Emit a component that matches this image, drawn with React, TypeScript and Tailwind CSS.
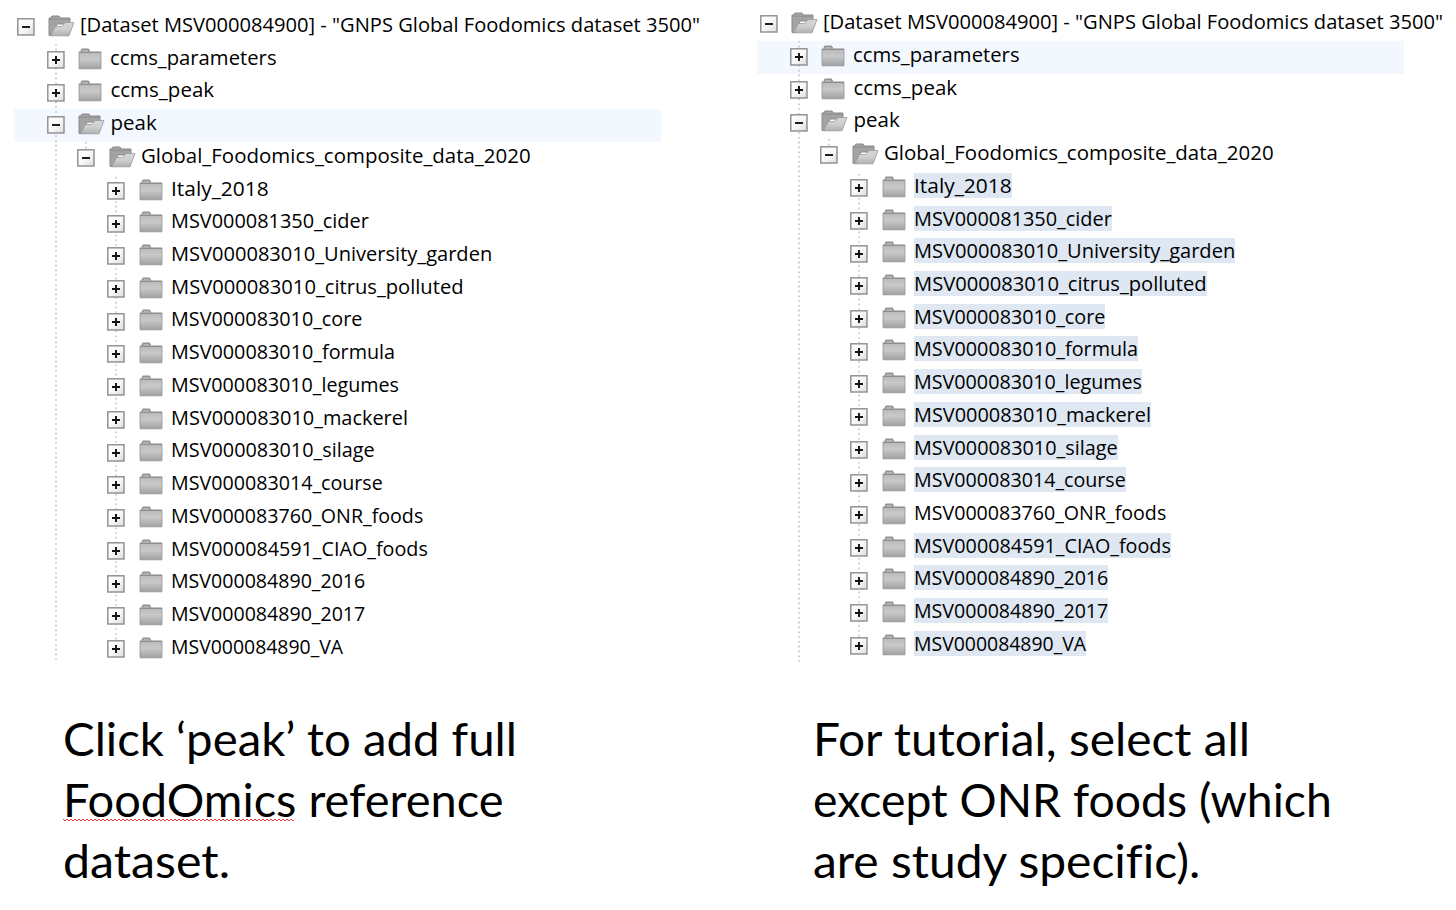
import { useLayoutEffect, useRef, useState } from "react";

type Node = { label: string; level: number; open?: boolean; width: number };

const nodes: Node[] = [
  { label: '[Dataset MSV000084900] - "GNPS Global Foodomics dataset 3500"', level: 0, open: true, width: 620 },
  { label: "ccms_parameters", level: 1, width: 167 },
  { label: "ccms_peak", level: 1, width: 104 },
  { label: "peak", level: 1, open: true, width: 46 },
  { label: "Global_Foodomics_composite_data_2020", level: 2, open: true, width: 390 },
  { label: "Italy_2018", level: 3, width: 98 },
  { label: "MSV000081350_cider", level: 3, width: 198 },
  { label: "MSV000083010_University_garden", level: 3, width: 321 },
  { label: "MSV000083010_citrus_polluted", level: 3, width: 293 },
  { label: "MSV000083010_core", level: 3, width: 191 },
  { label: "MSV000083010_formula", level: 3, width: 224 },
  { label: "MSV000083010_legumes", level: 3, width: 228 },
  { label: "MSV000083010_mackerel", level: 3, width: 237 },
  { label: "MSV000083010_silage", level: 3, width: 204 },
  { label: "MSV000083014_course", level: 3, width: 212 },
  { label: "MSV000083760_ONR_foods", level: 3, width: 252 },
  { label: "MSV000084591_CIAO_foods", level: 3, width: 257 },
  { label: "MSV000084890_2016", level: 3, width: 194 },
  { label: "MSV000084890_2017", level: 3, width: 194 },
  { label: "MSV000084890_VA", level: 3, width: 172.5 },
];

const indents = ["pl-[3px]", "pl-[33.4px]", "pl-[63.5px]", "pl-[93.800px]"];

function Fitted({ text, width }: { text: string; width: number }) {
  const ref = useRef<HTMLSpanElement>(null);
  const [scale, setScale] = useState(1);
  useLayoutEffect(() => {
    if (ref.current) setScale(width / ref.current.offsetWidth);
  }, [width]);
  return (
    <span ref={ref} className="inline-block origin-left whitespace-pre" style={{ transform: `scaleX(${scale})` }}>
      {text}
    </span>
  );
}

function Toggle({ open }: { open?: boolean }) {
  return (
    <svg className="mt-[7.300px] h-[18px] w-[18px] shrink-0" viewBox="0 0 18 18">
      <rect x="0.8" y="0.8" width="16.2" height="16.2" fill="url(#toggle)" stroke="#8c8c8c" strokeWidth="1.4" />
      <path d={open ? "M5 9h8" : "M5 9h8M9 5v8"} stroke="#111" strokeWidth="1.9" />
    </svg>
  );
}

function Folder({ open }: { open?: boolean }) {
  return (
    <svg className="ml-[13.600px] mt-[4px] h-[22px] w-[27px] shrink-0" viewBox="0 0 27 22">
      {open ? (
        <>
          <path d="M1 20.5V3h1.5l1.5-2h7l1.5 2H22v6H9L4 20.5z" fill="#a3a3a3" stroke="#8b8b8b" />
          <path d="M1.500 4.200h20.500" stroke="#8e8e8e" />
          <path d="M2.500 20.800L7.500 11.500h6l3.500-4H26L21 20.800z" fill="url(#paper)" stroke="#9a9a9a" strokeWidth="0.8" />
        </>
      ) : (
        <>
          <path d="M1 20.800V4h2l1.200-2.500h6L11.500 4H23v16.800z" fill="url(#folder)" stroke="#949494" strokeWidth="0.8" />
          <path d="M3 3.200l1.200-2h6l1.300 2M1 4.300h22" fill="none" stroke="#8f8f8f" strokeWidth="1.300" />
        </>
      )}
    </svg>
  );
}

function Line({ className }: { className: string }) {
  return (
    <svg className={"absolute w-[2px] " + className}>
      <line x1="1" y1="0" x2="1" y2="100%" stroke="#b5b5b5" strokeWidth="1.3" strokeDasharray="1.6 3.2" />
    </svg>
  );
}

function Tree({ hovered, selectable }: { hovered: number; selectable?: boolean }) {
  return (
    <div className="relative w-[647px]">
      <div>
        {nodes.map((n, i) => {
          const selected = selectable && n.level === 3 && !n.label.includes("ONR");
          return (
            <div key={n.label} className={"flex h-[32.720px] items-start " + indents[n.level] + (i === hovered ? " bg-[#f3f8ff]" : "")}>
              <div className="relative z-10 flex items-start">
                <Toggle open={n.open} />
                <Folder open={n.open} />
              </div>
              <div
                className={"ml-[5px] mt-[1px] h-[25px] shrink-0 whitespace-nowrap text-[20.500px] leading-[25px] text-black " + (selected ? "bg-[#dee7f2]" : "")}
                style={{ width: n.width }}
              >
                <Fitted text={n.label} width={n.width} />
              </div>
            </div>
          );
        })}
      </div>
      <Line className={"left-[41.300px] top-[33px] " + (selectable ? "h-[622px]" : "h-[619px]")} />
      <Line className="left-[71.500px] top-[131px] h-[12px]" />
      <Line className="left-[101.700px] top-[166px] h-[468px]" />
    </div>
  );
}

function Squiggle() {
  return (
    <svg className="absolute left-0 top-[49px] h-[4px] w-[231px]">
      <defs>
        <pattern id="wave" width="4" height="4" patternUnits="userSpaceOnUse">
          <path d="M0 1L2 3L4 1" fill="none" stroke="#f0282d" strokeWidth="0.9" />
        </pattern>
      </defs>
      <rect width="231" height="4" fill="url(#wave)" />
    </svg>
  );
}

function Caption({ lines }: { lines: { text: string; width: number; misspelt?: boolean }[] }) {
  return (
    <div className="font-[Lato,sans-serif] text-[46px] leading-[61px] text-black [font-variant-ligatures:none]">
      {lines.map((l) => (
        <div key={l.text} className="relative flex whitespace-nowrap">
          <Fitted text={l.text} width={l.width} />
          {l.misspelt && <Squiggle />}
        </div>
      ))}
    </div>
  );
}

export default function App() {
  return (
    <div className="flex h-[910px] w-[1456px] overflow-hidden bg-white font-['Open_Sans',sans-serif]">
      <svg className="absolute h-0 w-0">
        <defs>
          <linearGradient id="folder" x1="0" y1="0" x2="0" y2="1">
            <stop offset="0" stopColor="#b3b3b3" />
            <stop offset="0.5" stopColor="#c9c9ca" />
            <stop offset="1" stopColor="#a0a1a3" />
          </linearGradient>
          <linearGradient id="paper" x1="0" y1="0" x2="0" y2="1">
            <stop offset="0" stopColor="#d6d6d6" />
            <stop offset="0.5" stopColor="#cfcfd0" />
            <stop offset="1" stopColor="#aeafb1" />
          </linearGradient>
          <linearGradient id="toggle" x1="0" y1="0" x2="1" y2="1">
            <stop offset="0" stopColor="#fff" />
            <stop offset="0.5" stopColor="#f8f8f8" />
            <stop offset="1" stopColor="#dcdcdc" />
          </linearGradient>
        </defs>
      </svg>
      <div className="flex w-[743px] flex-col pl-[13.500px] pt-[11px]">
        <div className="h-[696.700px]">
          <Tree hovered={3} />
        </div>
        <div className="pl-[49.500px]">
          <Caption
            lines={[
              { text: "Click ‘peak’ to add full", width: 454 },
              { text: "FoodOmics reference", width: 441, misspelt: true },
              { text: "dataset.", width: 167 },
            ]}
          />
        </div>
      </div>
      <div className="flex w-[713px] flex-col pl-[13.500px] pt-[8.200px]">
        <div className="h-[699.500px]">
          <Tree hovered={1} selectable />
        </div>
        <div className="pl-[56px]">
          <Caption
            lines={[
              { text: "For tutorial, select all", width: 437 },
              { text: "except ONR foods (which", width: 519 },
              { text: "are study specific).", width: 387 },
            ]}
          />
        </div>
      </div>
    </div>
  );
}
